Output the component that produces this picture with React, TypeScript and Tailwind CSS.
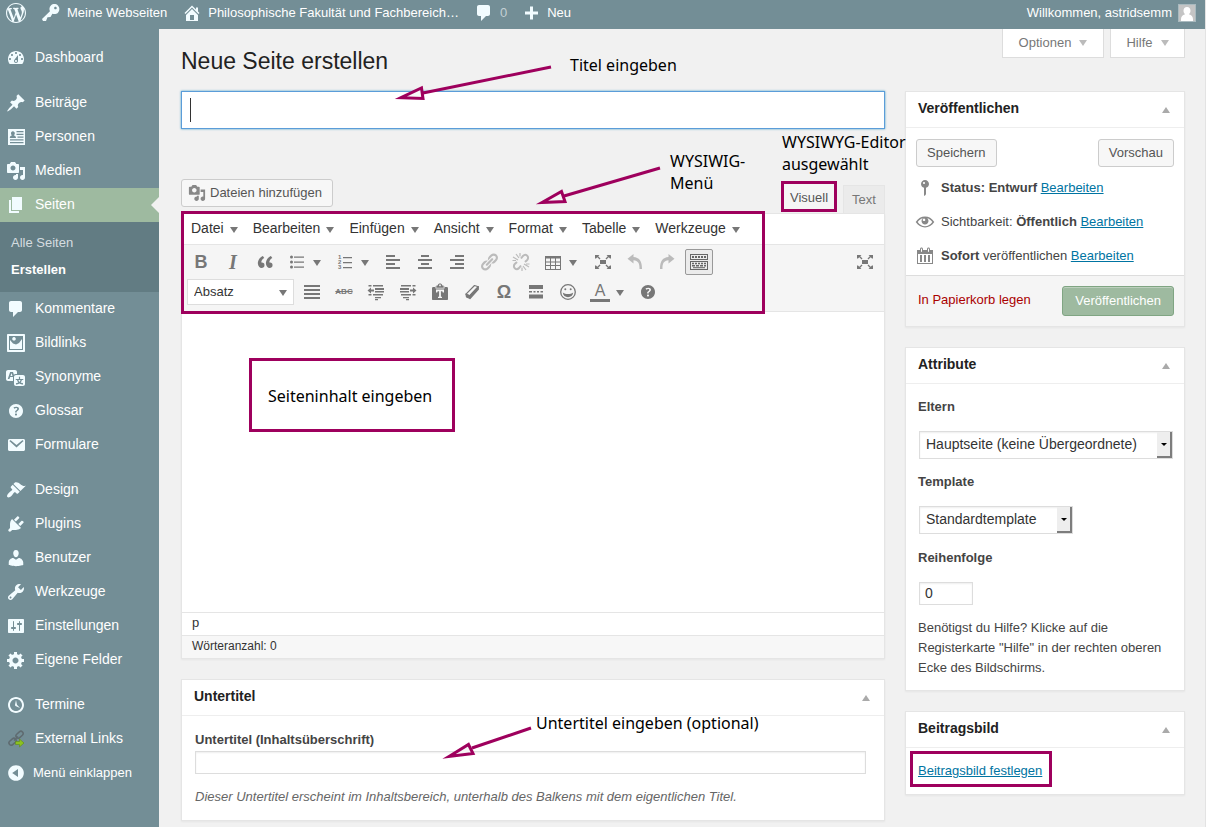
import React from "react";

/* 20×20 icon shapes used across the admin screen */
const shapes = {
  wordpress:
    "M20 10c0-5.51-4.49-10-10-10C4.48 0 0 4.49 0 10c0 5.52 4.48 10 10 10 5.51 0 10-4.48 10-10zM7.78 15.37L4.37 6.22c.55-.02 1.17-.08 1.17-.08.5-.06.44-1.13-.06-1.11 0 0-1.45.11-2.37.11-.18 0-.37 0-.58-.01C4.12 2.69 6.87 1.11 10 1.11c2.33 0 4.45.87 6.05 2.34-.68-.11-1.65.39-1.65 1.58 0 .74.45 1.36.9 2.1.35.61.55 1.36.55 2.46 0 1.49-1.4 5-1.4 5l-3.03-8.37c.54-.02.82-.17.82-.17.5-.05.44-1.25-.06-1.22 0 0-1.44.12-2.38.12-.87 0-2.33-.12-2.33-.12-.5-.03-.56 1.2-.06 1.22l.92.08 1.26 3.41zM17.41 10c.24-.64.74-1.87.43-4.25.7 1.29 1.05 2.71 1.05 4.25 0 3.29-1.73 6.24-4.4 7.78.97-2.59 1.94-5.2 2.92-7.78zM6.1 18.09C3.12 16.65 1.11 13.53 1.11 10c0-1.3.23-2.48.72-3.59C3.25 10.3 4.67 14.2 6.1 18.09zm4.03-6.63l2.58 6.98c-.86.29-1.76.45-2.71.45-.79 0-1.57-.11-2.29-.33.81-2.38 1.62-4.74 2.42-7.1z",
  key: "M16.95 2.58c1.96 1.95 1.96 5.12 0 7.07-1.51 1.51-3.75 1.84-5.59 1.01l-1.87 3.31-2.99.31L5 18H2l-1-2 7.95-7.69c-.92-1.87-.62-4.18.93-5.73 1.95-1.96 5.12-1.96 7.07 0zm-2.51 3.79c.74 0 1.33-.6 1.33-1.34 0-.73-.59-1.33-1.33-1.33-.73 0-1.33.6-1.33 1.33 0 .74.6 1.34 1.33 1.34z",
  home: "M16 8.5l1.53 1.53-1.06 1.06L10 4.6l-6.47 6.49-1.06-1.06L10 2.5l4 4v-2h2v4zm-6-2.46l6 5.99V18H4v-5.97zM12 17v-5H8v5h4z",
  comment: "M5 2h9c1.1 0 2 .9 2 2v7c0 1.1-.9 2-2 2h-2l-5 5v-5H5c-1.1 0-2-.9-2-2V4c0-1.1.9-2 2-2z",
  plus: "M17 8.500v3h-5v5H9v-5H4v-3h5v-5h3v5h5z",
  dashboard:
    "M3.76 16h12.48c1.1-1.37 1.76-3.11 1.76-5 0-4.42-3.58-8-8-8s-8 3.58-8 8c0 1.89.66 3.63 1.76 5zM10 4c.55 0 1 .45 1 1s-.45 1-1 1-1-.45-1-1 .45-1 1-1zM6 6c.55 0 1 .45 1 1s-.45 1-1 1-1-.45-1-1 .45-1 1-1zm8 0c.55 0 1 .45 1 1s-.45 1-1 1-1-.45-1-1 .45-1 1-1zm-5.37 5.55L12 7v6c0 1.1-.9 2-2 2s-2-.9-2-2c0-.57.24-1.08.63-1.45zM4 10c.55 0 1 .45 1 1s-.45 1-1 1-1-.45-1-1 .45-1 1-1zm12 0c.55 0 1 .45 1 1s-.45 1-1 1-1-.45-1-1 .45-1 1-1zm-5 3c0-.55-.45-1-1-1s-1 .45-1 1 .45 1 1 1 1-.45 1-1z",
  pin: "M10.44 3.02l1.82-1.82 6.36 6.35-1.83 1.82c-1.05-.68-2.48-.57-3.41.36l-.75.75c-.92.93-1.04 2.35-.35 3.41l-1.83 1.82-2.41-2.41-2.8 2.79c-.42.42-3.38 2.71-3.8 2.29s1.86-3.39 2.28-3.81l2.79-2.79L4.1 9.36l1.83-1.82c1.05.69 2.48.57 3.4-.36l.75-.75c.93-.92 1.05-2.35.36-3.41z",
  person:
    "M2 2h17v16H2zM6.800 4.200c-1.200 0-1.800 1-1.800 2.100 0 .9.500 1.700 1 2C4.500 8.700 3.800 9.600 3.800 11h6.200c0-1.400-.8-2.300-2.200-2.700.5-.3 1-1.100 1-2 0-1.100-.7-2.100-2-2.100zM10.500 4v1.200h7V4zM10.500 6.800V8h7V6.800zM11.500 9.500v1.200h6V9.500zM4 12.200v1.200h13.500v-1.200zM4 15v1.200h13.500V15z",
  media:
    "M13 11V4c0-.55-.45-1-1-1h-1.67L9 1H5L3.67 3H2c-.55 0-1 .45-1 1v7c0 .55.45 1 1 1h10c.55 0 1-.45 1-1zM7 4.5c1.38 0 2.5 1.12 2.5 2.5S8.38 9.5 7 9.5 4.5 8.38 4.5 7 5.62 4.5 7 4.5zM14 6h5v10.5c0 1.38-1.12 2.5-2.5 2.5S14 17.88 14 16.5s1.12-2.5 2.5-2.5c.17 0 .34.02.5.05V9h-3V6zm-4 8.05V13h2v3.5c0 1.38-1.12 2.5-2.5 2.5S7 17.88 7 16.5 8.12 14 9.5 14c.17 0 .34.02.5.05z",
  page: "M6 15V2h10v13H6zm-1 1h8v2H3V5h2v11z",
  picture:
    "M2 1h16c.6 0 1 .4 1 1v16c0 .6-.4 1-1 1H2c-.6 0-1-.4-1-1V2c0-.6.4-1 1-1zM3 3v14h14V3zM4 16V7l3 3.500 3 1 3-1.500 3-4V16zM8 4a1.800 1.800 0 1 0 .01 0z",
  translate:
    "M11 7H9.49c-.63 0-1.25.3-1.59.7L7 5H4.13l-2.39 7h1.69l.74-2H7v4H2c-1.1 0-2-.9-2-2V5c0-1.1.9-2 2-2h7c1.1 0 2 .9 2 2v2zM6.51 9H4.49l1-2.93zM10 8h7c1.1 0 2 .9 2 2v7c0 1.1-.9 2-2 2h-7c-1.1 0-2-.9-2-2v-7c0-1.1.9-2 2-2zm7.25 5v-1.08h-3.17V9.75h-1.16v2.17H9.75V13h1.28c.11.85.56 1.85 1.28 2.62-.87.36-1.89.62-2.31.62-.01.02.22.97.2 1.46.84 0 2.21-.5 3.28-1.15 1.09.65 2.48 1.15 3.34 1.15-.02-.49.2-1.44.2-1.46-.43 0-1.49-.27-2.38-.63.7-.77 1.14-1.77 1.25-2.61h1.36zm-3.81 1.93c-.5-.46-.85-1.13-1.01-1.93h2.09c-.17.8-.51 1.47-1 1.93l-.04.03s-.03-.02-.04-.03z",
  help: "M17 10c0-3.87-3.14-7-7-7-3.87 0-7 3.13-7 7s3.13 7 7 7c3.86 0 7-3.13 7-7zm-6.3 1.48H9.14v-.43c0-.38.08-.7.24-.98s.46-.57.88-.89c.41-.29.68-.53.81-.71.14-.18.2-.39.2-.62 0-.25-.09-.44-.28-.58-.19-.13-.45-.19-.79-.19-.58 0-1.25.19-2 .57l-.64-1.28c.87-.49 1.8-.74 2.77-.74.81 0 1.45.2 1.92.58.48.39.71.91.71 1.55 0 .43-.09.8-.29 1.11-.19.32-.57.67-1.11 1.06-.38.28-.61.49-.71.63-.1.15-.15.34-.15.57v.35zm-1.47 2.74c-.18-.17-.27-.42-.27-.73 0-.33.08-.58.26-.75s.43-.25.77-.25c.32 0 .57.09.75.26s.27.42.27.74c0 .3-.09.55-.27.72-.18.18-.43.27-.75.27-.33 0-.58-.09-.76-.26z",
  mail: "M3.500 4h14c.8 0 1.500.7 1.500 1.500v9c0 .8-.7 1.500-1.500 1.500h-14c-.8 0-1.500-.7-1.500-1.500v-9C2 4.700 2.700 4 3.500 4zM4 5.400c-.5.3-.5.8-.1 1.200l6.600 5.800L17 6.600c.5-.4.5-.9 0-1.200-.4-.2-.7-.1-1 .2l-5.500 4.300L5 5.600c-.3-.3-.7-.4-1-.2z",
  brush:
    "M14.48 11.06L7.41 3.99l1.5-1.5c.5-.56 2.3-.47 3.51.32 1.21.8 1.43 1.28 2.91 2.1 1.18.64 2.45 1.26 4.45.85zm-.71.71L6.7 4.7 4.93 6.47c-.39.39-.39 1.02 0 1.41l1.06 1.06c.39.39.39 1.03 0 1.42-.6.6-1.43 1.11-2.21 1.69-.35.26-.7.53-1.01.84C1.43 14.23.4 16.08 1.4 17.07c.99 1 2.84-.03 4.18-1.36.31-.31.58-.66.85-1.02.57-.78 1.08-1.61 1.69-2.21.39-.39 1.02-.39 1.41 0l1.06 1.06c.39.39 1.02.39 1.41 0z",
  plug: "M13.11 4.36L9.87 7.6 8 5.73l3.24-3.24c.35-.34 1.05-.2 1.56.32.52.51.66 1.21.31 1.55zm-8 1.77l.91-1.12 9.01 9.01-1.19.84c-.71.71-2.63 1.16-3.82 1.16H6.14L4.9 17.26c-.59.59-1.54.59-2.12 0-.59-.58-.59-1.53 0-2.12l1.24-1.24v-3.88c0-1.13.4-3.19 1.09-3.89zm7.26 3.97l3.24-3.24c.34-.35 1.04-.21 1.55.31.52.51.66 1.21.31 1.55l-3.24 3.25z",
  user: "M10 9.25c-2.27 0-2.73-3.44-2.73-3.44C7 4.02 7.82 2 9.97 2c2.16 0 2.98 2.02 2.71 3.81 0 0-.41 3.44-2.68 3.44zm0 2.57L12.72 10c2.39 0 4.52 2.33 4.52 4.53v2.49s-3.65 1.13-7.24 1.13c-3.65 0-7.24-1.13-7.24-1.13v-2.49c0-2.25 1.94-4.48 4.47-4.48z",
  wrench:
    "M16.68 9.77c-1.34 1.34-3.3 1.67-4.95.99l-5.41 6.52c-.99.99-2.59.99-3.58 0s-.99-2.59 0-3.57l6.52-5.42c-.68-1.65-.35-3.61.99-4.95 1.28-1.28 3.12-1.62 4.72-1.06l-2.89 2.89 2.82 2.82 2.86-2.87c.53 1.58.18 3.39-1.08 4.65zM3.81 16.21c.4.39 1.04.39 1.43 0 .4-.4.4-1.04 0-1.43-.39-.4-1.03-.4-1.43 0-.39.39-.39 1.03 0 1.43z",
  sliders:
    "M18 16V4c0-.55-.45-1-1-1H3c-.55 0-1 .45-1 1v12c0 .55.45 1 1 1h14c.55 0 1-.45 1-1zM8 11h1c.55 0 1 .45 1 1s-.45 1-1 1H8v1.5c0 .28-.22.5-.5.5s-.5-.22-.5-.5V13H6c-.55 0-1-.45-1-1s.45-1 1-1h1V5.5c0-.28.22-.5.5-.5s.5.22.5.5V11zm5-2h-1c-.55 0-1-.45-1-1s.45-1 1-1h1V5.5c0-.28.22-.5.5-.5s.5.22.5.5V7h1c.55 0 1 .45 1 1s-.45 1-1 1h-1v5.5c0 .28-.22.5-.5.5s-.5-.22-.5-.5V9z",
  gear: "M18 12h-2.18c-.17.7-.44 1.35-.81 1.93l1.54 1.54-2.1 2.1-1.54-1.54c-.58.36-1.23.63-1.91.79V19H8v-2.18c-.68-.16-1.33-.43-1.91-.79l-1.54 1.54-2.12-2.12 1.54-1.54c-.36-.58-.63-1.23-.79-1.91H1V9.03h2.17c.16-.7.44-1.35.8-1.94L2.43 5.55l2.1-2.1 1.54 1.54c.58-.37 1.24-.64 1.93-.81V2h3v2.18c.68.16 1.33.43 1.91.79l1.54-1.54 2.12 2.12-1.54 1.54c.36.59.64 1.24.8 1.94H18V12zm-8.5 1.5c1.66 0 3-1.34 3-3s-1.34-3-3-3-3 1.34-3 3 1.34 3 3 3z",
  clock:
    "M10 2c4.42 0 8 3.58 8 8s-3.58 8-8 8-8-3.58-8-8 3.58-8 8-8zm0 14c3.31 0 6-2.69 6-6s-2.69-6-6-6-6 2.69-6 6 2.69 6 6 6zm-.71-5.29c.07.05.14.1.23.15l-.02.02L14 13l-3.03-3.19L10 5l-.97 4.81h.01c0 .02-.01.05-.02.09S9 9.97 9 10c0 .28.1.52.29.71z",
  collapse:
    "M10 2.160c4.330 0 7.840 3.510 7.840 7.840s-3.510 7.840-7.840 7.840S2.160 14.330 2.160 10 5.710 2.160 10 2.160zm2 11.720V6.120L6.180 9.970z",
  quote:
    "M9.49 13.22c0-.74-.2-1.38-.61-1.9-.62-.78-1.83-.88-2.53-.72-.29-1.65 1.11-3.75 2.92-4.65L7.88 4c-2.73 1.3-5.42 4.28-4.96 8.05C3.21 14.43 4.59 16 6.54 16c.85 0 1.56-.25 2.12-.75s.83-1.18.83-2.03zm8.05 0c0-.74-.2-1.38-.61-1.9-.63-.78-1.83-.88-2.53-.72-.29-1.65 1.11-3.75 2.92-4.65L15.93 4c-2.73 1.3-5.41 4.28-4.95 8.05.29 2.38 1.66 3.95 3.61 3.95.85 0 1.56-.25 2.12-.75s.83-1.18.83-2.03z",
  ul: "M4.500 6.500a1.500 1.500 0 1 1 0-3 1.500 1.500 0 0 1 0 3zM7 4.500h10v1.200H7zM4.500 11.500a1.500 1.500 0 1 1 0-3 1.500 1.500 0 0 1 0 3zM7 9.500h10v1.200H7zM4.500 16.500a1.500 1.500 0 1 1 0-3 1.500 1.500 0 0 1 0 3zM7 14.500h10v1.200H7z",
  left: "M12 5V3H3v2h9zm5 4V7H3v2h14zm-5 4v-2H3v2h9zm5 4v-2H3v2h14z",
  center: "M14 5V3H6v2h8zm3 4V7H3v2h14zm-3 4v-2H6v2h8zm3 4v-2H3v2h14z",
  right: "M17 5V3H8v2h9zm0 4V7H3v2h14zm0 4v-2H8v2h9zm0 4v-2H3v2h14z",
  justify: "M2 3h16v2H2zM2 7h16v2H2zM2 11h16v2H2zM2 15h16v2H2z",
  link: "M17.74 2.76c1.68 1.69 1.68 4.41 0 6.1l-1.53 1.52c-1.12 1.12-2.7 1.47-4.14 1.09l2.62-2.61.76-.77.76-.76c.84-.84.84-2.2 0-3.04-.84-.85-2.2-.85-3.04 0l-.77.76-3.38 3.38c-.37-1.44-.02-3.02 1.1-4.14l1.52-1.53c1.69-1.68 4.42-1.68 6.1 0zM8.59 13.43l5.34-5.34c.42-.42.42-1.1 0-1.52-.44-.43-1.13-.39-1.53 0l-5.33 5.34c-.42.42-.42 1.1 0 1.52.44.43 1.13.39 1.52 0zm-.76 2.29l4.14-4.15c.38 1.44.03 3.02-1.09 4.14l-1.52 1.53c-1.69 1.68-4.41 1.68-6.1 0-1.68-1.68-1.68-4.42 0-6.1l1.53-1.52c1.12-1.12 2.7-1.47 4.14-1.1l-4.14 4.15c-.85.84-.85 2.2 0 3.05.84.84 2.2.84 3.04 0z",
  table: "M2 4h16v14H2zM3 6.500v3h4v-3zM8 6.500v3h4v-3zM13 6.500v3h4v-3zM3 10.500v2.500h4v-2.500zM8 10.500v2.500h4v-2.500zM13 10.500v2.500h4v-2.500zM3 14v3h4v-3zM8 14v3h4v-3zM13 14v3h4v-3z",
  expand:
    "M7 8h6v4H7zM2 3h4.500L5.200 4.300 7.500 6.600l-.9.900-2.300-2.300L3 6.500H2zM18 3v3.500h-1l-1.300-1.300-2.300 2.300-.9-.9 2.300-2.300L13.500 3zM2 17v-3.500h1l1.300 1.300 2.300-2.300.9.900-2.300 2.300L6.500 17zM18 17h-4.500l1.300-1.300-2.300-2.300.9-.9 2.300 2.300 1.300-1.300h1z",
  undo: "M8.500 2v3c5.500.3 8.700 4 8.500 12h-2.500c.2-5.500-1.500-8.500-6-8.700v3.200L2.500 6.700z",
  redo: "M11.500 2v3C6 5.300 2.800 9 3 17h2.500c-.2-5.500 1.500-8.500 6-8.700v3.200l6-4.800z",
  outdent:
    "M7 3h10v1.500H7zM2.500 3h3v1.500h-3zM9 6h9v2H9zM9 9h9v1.500H9zM7 12h10v1.500H7zM2.500 12h3v1.500h-3zM9 15h6v1.200H9zM9 17h3v1.200H9zM1.500 8.500L5 5.500v2h3v2H5v2z",
  indent:
    "M3 3h10v1.500H3zM14.500 3h3v1.500h-3zM2 6h9v2H2zM2 9h9v1.500H2zM3 12h10v1.500H3zM14.500 12h3v1.500h-3zM5 15h6v1.200H5zM8 17h3v1.200H8zM18.500 8.500L15 5.500v2h-3v2h3v2z",
  paste:
    "M6.500 3.500h1.200C8 2.100 8.900 1.500 10 1.500s2 .6 2.300 2h1.200V5H16.500c.8 0 1.500.5 1.500 1.200V17c0 .6-.4 1-1 1H3c-.6 0-1-.4-1-1V6.200C2 5.500 2.700 5 3.500 5h3zM10 2.500a.9.900 0 1 0 .01 0zM6 7.500v3h1.200l.5-1.300h1.400v5.600H8V16h4v-1.200h-1.100V9.200h1.400l.5 1.300H14v-3zM5.500 4.500v2h9v-2h-.8v1.200H6.300V4.500z",
  more: "M3 3h14v4H3zM3 9h3v1.500H3zM7.500 9h2v1.500h-2zM11 9h2v1.500h-2zM14.500 9H17v1.500h-2.500zM3 12.500h14v4H3z",
  status:
    "M14 6c0 1.860-1.280 3.410-3 3.860V16c0 1-2 2-2 2V9.860c-1.720-.45-3-2-3-3.860 0-2.210 1.790-4 4-4s4 1.790 4 4zM8 5c0 .55.45 1 1 1s1-.45 1-1-.45-1-1-1-1 .45-1 1z",
  eye: "M18.900 9.400C17 6.500 13.700 4.500 10 4.500S3 6.500 1.100 9.400l-.4.600.4.600c1.900 2.900 5.200 4.900 8.900 4.900s7-2 8.900-4.900l.4-.6zM10 14.200c-2.900 0-5.700-1.600-7.300-4.200 1.200-1.800 3-3.300 5-3.800C6.900 7 6.500 8 6.500 9c0 1.900 1.600 3.500 3.500 3.500s3.500-1.600 3.500-3.500c0-1-.4-2-1.200-2.800 2 .5 3.800 2 5 3.800-1.600 2.600-4.400 4.200-7.300 4.200zM9 6.500a1.300 1.300 0 1 0 .01 0z",
  calendar:
    "M15 4h3v14H2V4h3V3c0-.83.67-1.5 1.5-1.5S8 2.17 8 3v1h4V3c0-.83.67-1.5 1.5-1.5S15 2.17 15 3v1zM6 3v2.5c0 .28.22.5.5.5s.5-.22.5-.5V3c0-.28-.22-.5-.5-.5S6 2.72 6 3zm7 0v2.5c0 .28.22.5.5.5s.5-.22.5-.5V3c0-.28-.22-.5-.5-.5s-.5.22-.5.5zm4 14V8H3v9h14zM7 16V9H5v7h2zm4 0V9H9v7h2zm4 0V9h-2v7h2z",
};

type IconName = keyof typeof shapes;

function Icon({ name, className = "size-5" }: { name: IconName; className?: string }) {
  return (
    <svg viewBox="0 0 20 20" className={`shrink-0 ${className}`} fill="currentColor" fillRule="evenodd" aria-hidden="true">
      <path d={shapes[name]} />
    </svg>
  );
}

function Triangle({ up = false, className = "" }: { up?: boolean; className?: string }) {
  return (
    <svg viewBox="0 0 8 6" className={`h-[6px] w-2 shrink-0 ${className}`} fill="currentColor" aria-hidden="true">
      <path d={up ? "M0 6L4 0l4 6z" : "M0 0h8L4 6z"} />
    </svg>
  );
}

function ChainIcon() {
  return (
    <svg viewBox="0 0 20 20" className="size-5 shrink-0" fill="none" aria-hidden="true">
      <g stroke="#5f6b70" strokeWidth="1.500">
        <rect x="9.500" y="3.500" width="8" height="4.500" rx="2.200" transform="rotate(-42 13.500 5.700)" />
        <rect x="2.500" y="10.500" width="8" height="4.500" rx="2.200" transform="rotate(-42 6.500 12.700)" />
        <path d="M8 11.500l4-4" />
      </g>
      <path d="M9.500 12.500h4V10l4.500 4-4.500 4v-2.500h-4z" fill="#8cc11f" stroke="#5d8a1b" strokeWidth=".6" />
    </svg>
  );
}

function UnlinkIcon() {
  return (
    <svg viewBox="0 0 20 20" className="size-5" fill="none" stroke="currentColor" strokeWidth="2" aria-hidden="true">
      <path d="M10 6.500l2-2.500c1.200-1.300 3-1.400 4.200-.3s1.200 3 0 4.300L14 10" />
      <path d="M10 13.500l-2 2.500c-1.200 1.300-3 1.400-4.200.3s-1.200-3 0-4.300L6 10" />
      <path d="M2 5l5 3M5 2l3 4M9 1v3.500M18 15l-5-3M15 18l-3-4M11 19v-3.500M1.500 8.500H5M15 12h3.500" strokeWidth="1.200" />
    </svg>
  );
}

function EraserIcon() {
  return (
    <svg viewBox="0 0 20 20" className="size-5" aria-hidden="true" stroke="currentColor" strokeWidth="1.200" strokeLinejoin="round">
      <path d="M12.500 3.500l3.800 1.200-8.500 9-3.800-1.500z" fill="none" />
      <path d="M16.300 4.700v2.600l-8.300 9.200-.2-2.800zM4 12.200l3.800 1.500.2 2.800-3.500-1.500z" fill="currentColor" />
    </svg>
  );
}

function SmileyIcon() {
  return (
    <svg viewBox="0 0 20 20" className="size-5" aria-hidden="true">
      <circle cx="10" cy="10" r="7.300" fill="none" stroke="currentColor" strokeWidth="1.300" />
      <circle cx="7.300" cy="7.300" r="1" fill="currentColor" />
      <circle cx="12.700" cy="7.300" r="1" fill="currentColor" />
      <path d="M4.800 10.500c1.500 1 3.200 1.500 5.200 1.500s3.700-.5 5.200-1.500c-.3 2.800-2.400 4.700-5.200 4.700s-4.900-1.900-5.200-4.700z" fill="currentColor" />
    </svg>
  );
}

function KitchenSinkIcon() {
  return (
    <svg viewBox="0 0 20 20" className="size-5" aria-hidden="true" fill="none" stroke="currentColor">
      <rect x="1.500" y="2.500" width="17" height="5" strokeWidth="1" />
      <rect x="1.500" y="9.500" width="17" height="8" strokeWidth="1" />
      <path d="M3 5h14" strokeWidth="2" strokeDasharray="2 1" />
      <path d="M3 11.500h14" strokeWidth="1.500" strokeDasharray="2 1" />
      <path d="M3 13.700h14" strokeWidth="1.500" strokeDasharray="3 1" />
      <path d="M4 15.700h12" strokeWidth="1" />
    </svg>
  );
}

function NumberedIcon() {
  return (
    <svg viewBox="0 0 20 20" className="size-5" aria-hidden="true" fill="currentColor">
      <path d="M8 5h9v1.200H8zM8 10h9v1.200H8zM8 15h9v1.200H8z" />
      <g fontFamily="Liberation Sans, sans-serif" fontSize="6" fontWeight="bold">
        <text x="3" y="7">1</text>
        <text x="3" y="12">2</text>
        <text x="3" y="17">3</text>
      </g>
    </svg>
  );
}

const menuGroups: { label: string; icon: IconName | "chain" }[][] = [
  [{ label: "Dashboard", icon: "dashboard" }],
  [
    { label: "Beiträge", icon: "pin" },
    { label: "Personen", icon: "person" },
    { label: "Medien", icon: "media" },
    { label: "Seiten", icon: "page" },
    { label: "Kommentare", icon: "comment" },
    { label: "Bildlinks", icon: "picture" },
    { label: "Synonyme", icon: "translate" },
    { label: "Glossar", icon: "help" },
    { label: "Formulare", icon: "mail" },
  ],
  [
    { label: "Design", icon: "brush" },
    { label: "Plugins", icon: "plug" },
    { label: "Benutzer", icon: "user" },
    { label: "Werkzeuge", icon: "wrench" },
    { label: "Einstellungen", icon: "sliders" },
    { label: "Eigene Felder", icon: "gear" },
  ],
  [
    { label: "Termine", icon: "clock" },
    { label: "External Links", icon: "chain" },
  ],
];

function Sidebar() {
  return (
    <nav aria-label="Hauptmenü" className="flex w-[159px] shrink-0 flex-col bg-[#738e96] pt-3 text-sm text-white">
      <div className="flex flex-col gap-[11px]">
        {menuGroups.map((group, i) => (
          <ul key={i}>
            {group.map(({ label, icon }) => {
              const current = label === "Seiten";
              return (
                <li key={label}>
                  <a
                    href="#"
                    aria-current={current ? "page" : undefined}
                    className={`relative flex h-[34px] items-center gap-2 pl-[6px] ${current ? "bg-[#9ebaa0]" : ""}`}
                  >
                    <span className="text-[#f2fcff]">{icon === "chain" ? <ChainIcon /> : <Icon name={icon} />}</span>
                    <span className="pb-[2px] pl-px">{label}</span>
                    {current && (
                      <span className="absolute top-[9px] right-0 border-y-8 border-r-8 border-y-transparent border-r-[#f1f1f1]" />
                    )}
                  </a>
                  {current && (
                    <ul className="flex flex-col gap-[9px] bg-[#627c83] px-[11px] pt-3 pb-[13px] text-[13px] leading-[18px]">
                      <li>
                        <a href="#" className="text-[#d5dde0]">Alle Seiten</a>
                      </li>
                      <li>
                        <a href="#" className="font-bold">Erstellen</a>
                      </li>
                    </ul>
                  )}
                </li>
              );
            })}
          </ul>
        ))}
      </div>
      <button type="button" className="flex h-[34px] items-center gap-[7px] pl-[6px] text-[13px]">
        <Icon name="collapse" className="size-5 text-[#f2fcff]" />
        Menü einklappen
      </button>
    </nav>
  );
}

function AdminBar() {
  return (
    <header className="flex h-[29px] items-center bg-[#738e96] pr-[9px] pb-[3px] pl-[6px] text-[13px] text-white">
      <a href="#" aria-label="WordPress" className="text-[#f2fcff]">
        <Icon name="wordpress" />
      </a>
      <a href="#" className="ml-[15px] flex items-center gap-[6px]">
        <Icon name="key" className="size-5 text-[#f2fcff]" />
        Meine Webseiten
      </a>
      <a href="#" className="ml-[15px] flex items-center gap-[6px]">
        <Icon name="home" className="size-5 text-[#f2fcff]" />
        Philosophische Fakultät und Fachbereich…
      </a>
      <a href="#" className="ml-[15px] flex items-center gap-[6px] text-[#c3d0d4]">
        <Icon name="comment" className="size-5 text-[#f2fcff]" />0
      </a>
      <a href="#" className="ml-[14px] flex items-center gap-[6px]">
        <Icon name="plus" className="size-5 text-[#f2fcff]" />
        Neu
      </a>
      <a href="#" className="ml-auto flex items-center gap-[6px]">
        Willkommen, astridsemm
        <svg viewBox="0 0 18 18" className="size-[18px]" aria-hidden="true">
          <path d="M0 0h18v18H0z" fill="#a9babf" />
          <path d="M1 1h16v16H1z" fill="#c4c4c4" />
          <path d="M9 3c2.200 0 3.500 1.500 3.500 3.700 0 1.500-.7 2.800-1.600 3.500 2.600.6 4.100 2.300 4.100 5V17H3v-1.800c0-2.700 1.500-4.400 4.100-5-.9-.7-1.600-2-1.600-3.500C5.500 4.500 6.800 3 9 3z" fill="#fff" />
        </svg>
      </a>
    </header>
  );
}

function Tool({
  label,
  drop = false,
  active = false,
  faded = false,
  children,
}: {
  label: string;
  drop?: boolean;
  active?: boolean;
  faded?: boolean;
  children: React.ReactNode;
}) {
  return (
    <button
      type="button"
      aria-label={label}
      aria-pressed={active || undefined}
      className={`flex h-[26px] shrink-0 items-center border ${drop ? "w-11 gap-[6px] pl-[3px]" : "w-7 justify-center"} ${
        active ? "rounded-xs border-[#999] bg-[#ebebeb] text-[#666]" : "border-transparent"
      } ${faded ? "text-[#bbb]" : ""}`}
    >
      <span className="flex size-5 shrink-0 items-center justify-center">{children}</span>
      {drop && <Triangle className="mt-[2px]" />}
    </button>
  );
}

function Editor() {
  return (
    <section aria-label="Editor" className="border border-[#e5e5e5] bg-white text-[#333] shadow-xs">
      <div className="relative">
        <div className="flex h-[30px] items-center gap-[15px] pl-[9px] text-sm">
          {["Datei", "Bearbeiten", "Einfügen", "Ansicht", "Format", "Tabelle", "Werkzeuge"].map((m) => (
            <button type="button" key={m} className="flex items-center gap-[6px] pb-[3px]">
              {m}
              <Triangle className="mt-[5px] text-[#777]" />
            </button>
          ))}
        </div>
        <div role="toolbar" aria-label="Formatierung" className="flex flex-col gap-1 border-y border-[#e5e5e5] bg-[#f5f5f5] px-[5px] pt-1 pb-[6px] text-[#777]">
          <div className="flex gap-1">
            <Tool label="Fett"><b className="text-[18px] leading-5">B</b></Tool>
            <Tool label="Kursiv"><b className="font-[Liberation_Serif,serif] text-[20px] leading-5 italic">I</b></Tool>
            <Tool label="Zitat"><Icon name="quote" /></Tool>
            <Tool label="Liste" drop><Icon name="ul" /></Tool>
            <Tool label="Nummerierte Liste" drop><NumberedIcon /></Tool>
            <Tool label="Linksbündig"><Icon name="left" /></Tool>
            <Tool label="Zentriert"><Icon name="center" /></Tool>
            <Tool label="Rechtsbündig"><Icon name="right" /></Tool>
            <Tool label="Link einfügen" faded><Icon name="link" /></Tool>
            <Tool label="Link entfernen" faded><UnlinkIcon /></Tool>
            <Tool label="Tabelle" drop><Icon name="table" /></Tool>
            <div className="ml-[2px] flex gap-1">
              <Tool label="Ablenkungsfrei"><Icon name="expand" /></Tool>
              <Tool label="Rückgängig" faded><Icon name="undo" /></Tool>
              <Tool label="Wiederholen" faded><Icon name="redo" /></Tool>
              <Tool label="Werkzeugleiste umschalten" active><KitchenSinkIcon /></Tool>
            </div>
            <div className="ml-auto">
              <Tool label="Vollbild"><Icon name="expand" /></Tool>
            </div>
          </div>
          <div className="flex gap-1">
            <div className="relative">
              <select aria-label="Absatzformat" className="h-[26px] w-[107px] appearance-none border border-[#ddd] bg-white pl-[6px] text-[13px] text-[#333]">
                <option>Absatz</option>
              </select>
              <Triangle className="pointer-events-none absolute top-[11px] right-[7px]" />
            </div>
            <Tool label="Blocksatz"><Icon name="justify" /></Tool>
            <Tool label="Durchgestrichen"><s className="text-[8px] font-bold">ABC</s></Tool>
            <Tool label="Ausrücken"><Icon name="outdent" /></Tool>
            <Tool label="Einrücken"><Icon name="indent" /></Tool>
            <Tool label="Als Text einfügen"><Icon name="paste" /></Tool>
            <Tool label="Formatierung entfernen"><EraserIcon /></Tool>
            <Tool label="Sonderzeichen"><b className="text-[18px] leading-5">Ω</b></Tool>
            <Tool label="Weiterlesen"><Icon name="more" /></Tool>
            <Tool label="Smileys"><SmileyIcon /></Tool>
            <Tool label="Textfarbe" drop>
              <span className="flex h-5 w-5 items-center justify-center border-b-3 border-[#777] text-base leading-4">A</span>
            </Tool>
            <Tool label="Hilfe"><Icon name="help" /></Tool>
          </div>
        </div>
        <div className="pointer-events-none absolute -top-[3px] -bottom-[2px] -left-px w-[584px] border-3 border-[#9e005d]" />
      </div>
      <div role="textbox" aria-label="Seiteninhalt" contentEditable suppressContentEditableWarning className="h-[300px]" />
      <div className="h-[23px] border-t border-[#e5e5e5] pl-[10px] text-[13px] leading-[20px]">p</div>
      <div className="h-[23px] border-t border-[#e5e5e5] bg-[#f7f7f7] pl-[10px] text-xs leading-[20px]">Wörteranzahl: 0</div>
    </section>
  );
}

function Panel({ title, children }: { title: string; children: React.ReactNode }) {
  return (
    <section className="border border-[#e5e5e5] bg-white shadow-xs">
      <div className="flex h-9 items-center justify-between border-b border-[#eee] pr-[14px] pb-[3px] pl-3">
        <h2 className="text-sm font-bold text-[#222]">{title}</h2>
        <button type="button" aria-label={`${title} umschalten`} className="pt-1">
          <Triangle up className="text-[#aaa]" />
        </button>
      </div>
      {children}
    </section>
  );
}

function SubtleButton({ children }: { children: React.ReactNode }) {
  return (
    <button type="button" className="flex h-7 items-center gap-1 rounded-[3px] border border-[#ccc] bg-[#f7f7f7] px-[10px] pb-px text-[13px] text-[#555]">
      {children}
    </button>
  );
}

function EditLink() {
  return <a href="#" className="text-[#0074a2] underline">Bearbeiten</a>;
}

function DropField({ id, value, width }: { id: string; value: string; width: string }) {
  return (
    <div className={`relative ml-px ${width}`}>
      <select id={id} className="h-7 w-full appearance-none border border-[#ddd] bg-white pb-[3px] pl-[6px] text-sm text-[#333] shadow-[inset_0_1px_2px_rgba(0,0,0,0.07)]">
        <option>{value}</option>
      </select>
      <span className="pointer-events-none absolute inset-y-px right-px flex w-[15px] items-center justify-center border-r-2 border-b-2 border-[#7d7d7d] bg-[#eee] text-black">
        <svg viewBox="0 0 6 3" className="h-[3px] w-[6px]" aria-hidden="true">
          <path d="M0 0h6L3 3z" />
        </svg>
      </span>
    </div>
  );
}

function Note({ className, children }: { className: string; children: React.ReactNode }) {
  return (
    <p className={`pointer-events-none absolute font-[Noto_Sans,sans-serif] text-base leading-[22px] whitespace-nowrap text-black ${className}`}>
      {children}
    </p>
  );
}

function Arrow({ className, box, d, tail }: { className: string; box: string; d: string; tail: string }) {
  return (
    <svg viewBox={box} className={`pointer-events-none absolute ${className}`} fill="none" stroke="#9e005d" aria-hidden="true">
      <path d={tail} strokeWidth="3" />
      <path d={d} strokeWidth="3" fill="#f6f6f6" strokeMiterlimit="8" />
    </svg>
  );
}

export default function App() {
  return (
    <div className="flex min-h-screen flex-col border-r border-[#e3e3e3] bg-[#f1f1f1] font-[Liberation_Sans,Arial,sans-serif] text-[13px] text-[#444]">
      <AdminBar />
      <div className="flex flex-1">
        <Sidebar />
        <main className="flex min-w-0 flex-1 gap-5 pr-5 pl-[22px]">
          <div className="relative flex min-w-0 flex-1 flex-col pb-[6px]">
            <h1 className="mt-[17px] text-[23px] leading-[30px] text-[#222]">Neue Seite erstellen</h1>
            <input
              type="text"
              aria-label="Titel"
              defaultValue=""
              className="mt-[15px] h-[38px] border border-[#5b9dd9] bg-white px-2 text-[22px] text-[#333] shadow-[0_0_2px_rgba(30,140,190,0.8)] outline-none"
            />
            <div className="mt-[50px] flex h-[34px] items-start justify-between">
              <SubtleButton>
                <span className="-ml-1 text-[#888]"><Icon name="media" className="size-[18px]" /></span>
                Dateien hinzufügen
              </SubtleButton>
              <div className="mt-[2px] flex gap-[6px]">
                <button type="button" className="h-[31px] w-14 border-3 border-[#9e005d] bg-[#f5f5f5] pt-[2px] text-[#555]">
                  Visuell
                </button>
                <button type="button" className="mt-1 h-[28px] w-[42px] border border-b-0 border-[#e5e5e5] bg-[#ebebeb] text-[#777]">
                  Text
                </button>
              </div>
            </div>
            <Editor />
            <div className="mt-5">
              <Panel title="Untertitel">
                <div className="flex flex-col px-[13px] pt-[15px] pb-[14px]">
                  <label htmlFor="subtitle" className="leading-[18px] font-bold">Untertitel (Inhaltsüberschrift)</label>
                  <input id="subtitle" type="text" className="mt-[2px] mr-[5px] h-[23px] border border-[#ddd] px-1 shadow-[inset_0_1px_2px_rgba(0,0,0,0.07)]" />
                  <p className="mt-[14px] leading-[18px] text-[#666] italic">
                    Dieser Untertitel erscheint im Inhaltsbereich, unterhalb des Balkens mit dem eigentlichen Titel.
                  </p>
                </div>
              </Panel>
            </div>

            {/* Text cursor in the title field */}
            <span className="pointer-events-none absolute top-[69px] left-[9px] h-6 w-px bg-[#333]" />

            {/* Explanatory notes laid over the screen */}
            <Note className="top-[25px] left-[389px]">Titel eingeben</Note>
            <Arrow
              className="top-[33px] left-[209px] h-[42px] w-[166px]"
              box="390 62 166 42"
              tail="M551 67L423 93"
              d="M401 97.700L421.500 88L423 98.500z"
            />
            <Note className="top-[121px] left-[489px]">WYSIWIG-<br />Menü</Note>
            <Arrow
              className="top-[131px] left-[349px] h-[50px] w-[136px]"
              box="530 160 136 50"
              tail="M660 168L564 196"
              d="M542 202.500L561.500 191.500L565 201.500z"
            />
            <Note className="top-[102px] left-[601px]">WYSIWYG-Editor<br />ausgewählt</Note>
            <div className="pointer-events-none absolute top-[329px] left-[68px] flex h-[74px] w-[206px] items-center border-3 border-[#9e005d] bg-white pt-[2px] pl-4 font-[Noto_Sans,sans-serif] text-base text-black">
              Seiteninhalt eingeben
            </div>
            <Note className="top-[683px] left-[355px]">Untertitel eingeben (optional)</Note>
            <Arrow
              className="top-[694px] left-[259px] h-[40px] w-[96px]"
              box="440 723 96 40"
              tail="M531 728L472 748"
              d="M449 756.500L468.500 744.500L473 753.500z"
            />
          </div>

          <aside className="flex w-[280px] shrink-0 flex-col">
            <div className="flex justify-end gap-[6px]">
              <button type="button" className="flex h-[29px] w-[102px] items-center justify-center gap-2 border border-t-0 border-[#ddd] bg-white text-[#777]">
                Optionen <Triangle className="text-[#bbb]" />
              </button>
              <button type="button" className="flex h-[29px] w-[75px] items-center justify-center gap-2 border border-t-0 border-[#ddd] bg-white text-[#777]">
                Hilfe <Triangle className="text-[#bbb]" />
              </button>
            </div>
            <div className="mt-[33px] flex flex-col gap-5">
              <Panel title="Veröffentlichen">
                <div className="flex justify-between px-[10px] pt-[11px]">
                  <SubtleButton>Speichern</SubtleButton>
                  <SubtleButton>Vorschau</SubtleButton>
                </div>
                <ul className="flex flex-col gap-[14px] px-[9px] pt-[11px] pb-[9px] [&>li]:flex [&>li]:items-center [&>li]:gap-[6px]">
                  <li>
                    <Icon name="status" className="size-5 text-[#888]" />
                    <span><b>Status: Entwurf</b> <EditLink /></span>
                  </li>
                  <li>
                    <Icon name="eye" className="size-5 text-[#888]" />
                    <span>Sichtbarkeit: <b>Öffentlich</b> <EditLink /></span>
                  </li>
                  <li>
                    <Icon name="calendar" className="size-5 text-[#888]" />
                    <span><b>Sofort</b> veröffentlichen <EditLink /></span>
                  </li>
                </ul>
                <div className="flex items-center justify-between border-t border-[#ddd] bg-[#f5f5f5] px-[10px] py-[10px] pl-3">
                  <a href="#" className="pb-[2px] text-[#a00]">In Papierkorb legen</a>
                  <button type="button" className="h-[30px] rounded-[3px] border border-[#80a583] bg-[#9ebaa0] px-3 text-white shadow-[inset_0_1px_0_#bcd0bd]">
                    Veröffentlichen
                  </button>
                </div>
              </Panel>

              <Panel title="Attribute">
                <div className="flex flex-col px-3 pt-[14px] pb-3 leading-[18px]">
                  <label htmlFor="parent" className="font-bold">Eltern</label>
                  <div className="mt-[15px] mb-[14px]">
                    <DropField id="parent" value="Hauptseite (keine Übergeordnete)" width="w-[254px]" />
                  </div>
                  <label htmlFor="template" className="font-bold">Template</label>
                  <div className="mt-[15px] mb-[15px]">
                    <DropField id="template" value="Standardtemplate" width="w-[154px]" />
                  </div>
                  <label htmlFor="order" className="font-bold">Reihenfolge</label>
                  <input id="order" type="text" defaultValue="0" className="mt-[15px] ml-px h-[23px] w-[54px] border border-[#ddd] px-[5px] pb-[2px] text-sm text-[#333] shadow-[inset_0_1px_2px_rgba(0,0,0,0.07)]" />
                  <p className="mt-[13px] leading-5">
                    Benötigst du Hilfe? Klicke auf die Registerkarte "Hilfe" in der rechten oberen Ecke des Bildschirms.
                  </p>
                </div>
              </Panel>

              <Panel title="Beitragsbild">
                <div className="px-1 pt-[3px] pb-[7px]">
                  <a href="#" className="inline-flex h-9 items-center border-3 border-[#9e005d] pt-1 pr-[7px] pl-[5px] text-[#0074a2] underline">
                    Beitragsbild festlegen
                  </a>
                </div>
              </Panel>
            </div>
          </aside>
        </main>
      </div>
    </div>
  );
}
